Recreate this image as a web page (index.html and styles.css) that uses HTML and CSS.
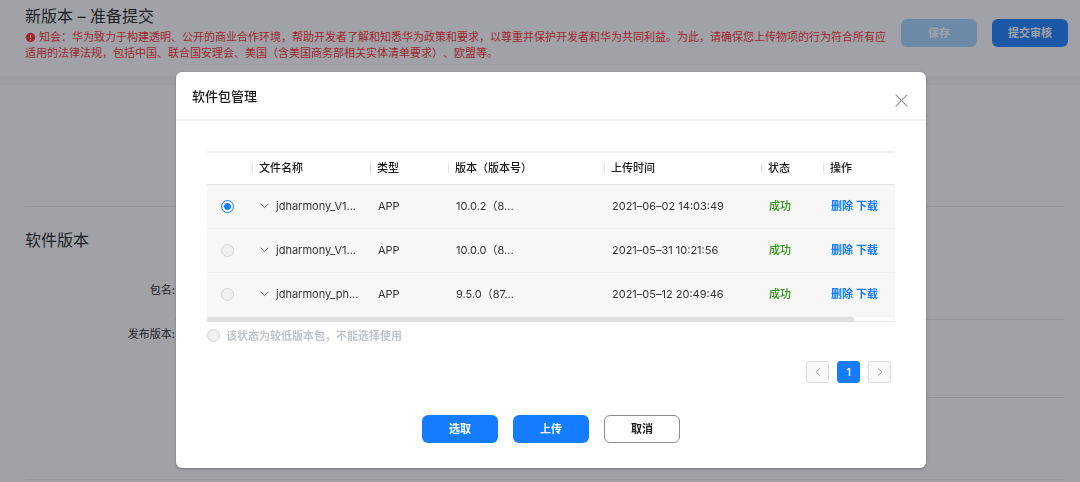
FILE: index.html
```html
<!DOCTYPE html>
<html lang="zh-CN">
<head>
<meta charset="utf-8">
<meta name="viewport" content="width=device-width, initial-scale=1">
<title>新版本 – 准备提交</title>
<link rel="stylesheet" href="styles.css">
</head>
<body>
<div class="page">
  <header class="page-header">
    <div class="page-intro">
      <h1 class="page-title">新版本 – 准备提交</h1>
      <p class="notice"><svg class="notice-icon" viewBox="0 0 12 12" aria-hidden="true"><circle cx="6" cy="6" r="5.2" fill="currentColor"/><path d="M6 3v3.6M6 8v1.2" stroke="#fff" stroke-width="1.2"/></svg>知会：华为致力于构建透明、公开的商业合作环境，帮助开发者了解和知悉华为政策和要求，以尊重并保护开发者和华为共同利益。为此，请确保您上传物项的行为符合所有应适用的法律法规，包括中国、联合国安理会、美国（含美国商务部相关实体清单要求）、欧盟等。</p>
    </div>
    <div class="page-actions">
      <button class="btn btn-muted" type="button">保存</button>
      <button class="btn btn-primary" type="button">提交审核</button>
    </div>
  </header>
  <main class="page-body">
    <section class="block-empty"></section>
    <section class="block">
      <h2 class="block-title">软件版本</h2>
      <dl class="fields">
        <div class="field"><dt>包名:</dt><dd></dd></div>
        <div class="field field-tall"><dt>发布版本:</dt><dd></dd></div>
      </dl>
    </section>
  </main>
</div>

<div class="overlay">
  <div class="modal" role="dialog" aria-modal="true" aria-labelledby="modal-title">
    <div class="modal-header">
      <h2 class="modal-title" id="modal-title">软件包管理</h2>
      <button class="close" type="button" aria-label="关闭"><svg viewBox="0 0 12 12" aria-hidden="true"><path d="M.6.6l10.8 10.8M11.4.6L.6 11.4"/></svg></button>
    </div>
    <div class="modal-body">
      <div class="table-wrap">
        <table class="table">
          <colgroup><col class="c-pick"><col class="c-name"><col class="c-type"><col class="c-ver"><col class="c-time"><col class="c-state"><col class="c-ops"></colgroup>
          <thead>
            <tr><td></td><th scope="col">文件名称</th><th scope="col">类型</th><th scope="col">版本（版本号）</th><th scope="col">上传时间</th><th scope="col">状态</th><th scope="col">操作</th></tr>
          </thead>
          <tbody>
            <tr>
              <td class="pick"><input class="radio" type="radio" name="pkg" aria-label="10.0.2" checked></td>
              <td><span class="file"><svg class="chevron" viewBox="0 0 9 6" aria-hidden="true"><path d="M.6.8l3.9 3.9L8.4.8"/></svg>jdharmony_V1...</span></td>
              <td>APP</td><td>10.0.2（8...</td><td>2021–06–02 14:03:49</td><td class="ok">成功</td>
              <td class="ops"><a href="#">删除</a> <a href="#">下载</a></td>
            </tr>
            <tr>
              <td class="pick"><input class="radio" type="radio" name="pkg" aria-label="10.0.0" disabled></td>
              <td><span class="file"><svg class="chevron" viewBox="0 0 9 6" aria-hidden="true"><path d="M.6.8l3.9 3.9L8.4.8"/></svg>jdharmony_V1...</span></td>
              <td>APP</td><td>10.0.0（8...</td><td>2021–05–31 10:21:56</td><td class="ok">成功</td>
              <td class="ops"><a href="#">删除</a> <a href="#">下载</a></td>
            </tr>
            <tr>
              <td class="pick"><input class="radio" type="radio" name="pkg" aria-label="9.5.0" disabled></td>
              <td><span class="file"><svg class="chevron" viewBox="0 0 9 6" aria-hidden="true"><path d="M.6.8l3.9 3.9L8.4.8"/></svg>jdharmony_ph...</span></td>
              <td>APP</td><td>9.5.0（87...</td><td>2021–05–12 20:49:46</td><td class="ok">成功</td>
              <td class="ops"><a href="#">删除</a> <a href="#">下载</a></td>
            </tr>
          </tbody>
        </table>
        <div class="scroll-track"><div class="scroll-thumb"></div></div>
      </div>
      <label class="hint"><input class="radio" type="radio" disabled>该状态为较低版本包，不能选择使用</label>
      <nav class="pager" aria-label="分页">
        <button class="page-btn" type="button" aria-label="上一页"><svg viewBox="0 0 6 8" aria-hidden="true"><path d="M4.8.6L1.2 4l3.6 3.4"/></svg></button>
        <button class="page-btn current" type="button" aria-current="page">1</button>
        <button class="page-btn" type="button" aria-label="下一页"><svg viewBox="0 0 6 8" aria-hidden="true"><path d="M1.2.6L4.8 4 1.2 7.4"/></svg></button>
      </nav>
    </div>
    <div class="modal-footer">
      <button class="btn btn-primary" type="button">选取</button>
      <button class="btn btn-primary" type="button">上传</button>
      <button class="btn btn-outline" type="button">取消</button>
    </div>
  </div>
</div>
</body>
</html>
```
FILE: styles.css
```css
* { box-sizing: border-box; }
body, h1, h2, p, dl, dd { margin: 0; }
body {
  background: #fff;
  color: #191919;
  font: 11px/16px Inter, "Noto Sans CJK SC", sans-serif;
  text-spacing-trim: space-all;
}
button { font: inherit; cursor: pointer; }

.page { height: 100vh; overflow: hidden; }
.page-header {
  display: flex;
  align-items: flex-start;
  gap: 12px;
  padding: 6px 12px 15px 25px;
  border-bottom: 9px solid #f6f7f8;
}
.page-intro { flex: 1; }
.page-title { font-size: 16px; line-height: 20px; font-weight: 400; margin-bottom: 3px; }
.notice { color: #fa2a2d; }
.notice-icon { width: 11px; height: 11px; margin-right: 3px; vertical-align: -2px; }
.page-actions { display: flex; gap: 15px; padding-top: 13px; }

.btn {
  width: 76px;
  height: 28px;
  padding: 0;
  border: 1px solid transparent;
  border-radius: 6px;
  font-weight: 600;
}
.btn-primary { background: #147dff; color: #fff; }
.btn-muted { background: #a3d4ff; color: #fff; }
.btn-outline { background: #fff; border-color: #8c8c8c; color: #191919; }

.page-body { padding: 0 16px 0 25px; }
.block-empty { height: 122px; border-bottom: 1px solid #eaebec; }
.block { padding-top: 21px; height: 273px; border-bottom: 1px solid #eaebec; }
.block-title { font-size: 16px; line-height: 24px; font-weight: 400; }
.fields { padding-top: 24px; }
.field { display: flex; height: 44px; line-height: 28px; }
.field dt { width: 150px; text-align: right; }
.field dd { flex: 1; border-bottom: 1px solid #e3e4e6; }
.field-tall { height: 78px; }

.overlay {
  position: fixed;
  inset: 0;
  display: flex;
  justify-content: center;
  align-items: flex-start;
  padding: 72px 0 0 22px;
  background: rgba(37, 40, 50, 0.43);
}
.modal {
  width: 750px;
  max-width: 100%;
  background: #fff;
  border-radius: 6px;
  box-shadow: 0 1px 3px rgba(0, 0, 0, 0.3);
}
.modal-header {
  display: flex;
  justify-content: space-between;
  align-items: center;
  height: 49px;
  padding: 0 18px 0 16px;
  border-bottom: 2px solid #f2f2f2;
}
.modal-title { font-size: 13px; line-height: 20px; font-weight: 500; }
.close { padding: 10px 0 0; border: 0; background: none; color: #8f8f8f; }
.close svg { display: block; width: 13px; height: 13px; }
.close path, .chevron path, .page-btn path { fill: none; stroke: currentColor; }

.modal-body { padding: 30px 31px 0; }
.table-wrap { border-top: 2px solid #efefef; }
.table { width: 100%; table-layout: fixed; border-collapse: collapse; }
.c-pick { width: 45px; }
.c-name { width: 118px; }
.c-type { width: 78px; }
.c-ver { width: 156px; }
.c-time { width: 157px; }
.c-state { width: 62px; }
.c-ops { width: auto; }
.table th, .table td { padding: 0 0 0 7px; text-align: left; white-space: nowrap; }
.table thead tr { height: 31px; border-bottom: 1px solid #e4e4e4; }
.table th {
  font-weight: 500;
  background: linear-gradient(#e2e2e2, #e2e2e2) left center / 1px 10px no-repeat;
}
.table tbody tr { height: 44px; background: #f7f7f7; border-bottom: 1px solid #f0f0f0; }
.table tbody td { color: #333; padding-left: 8px; }
.table tbody td.pick { padding-left: 14px; }
.file { display: flex; align-items: center; gap: 7px; }
.chevron { width: 9px; height: 6px; color: #666; }
.table tbody td.ok { color: #2b9412; font-weight: 500; }
.ops a { color: #147dff; font-weight: 600; text-decoration: none; }

.radio {
  appearance: none;
  display: block;
  flex: none;
  width: 13px;
  height: 13px;
  margin: 0;
  border: 1px solid #d4d4d4;
  border-radius: 50%;
  background: #f0f0f0;
}
.radio:checked {
  border-color: #147dff;
  background: radial-gradient(circle, #147dff 3px, #fff 4px);
}

.scroll-track { height: 5px; border-bottom: 1px solid #e4e4e4; }
.scroll-thumb { width: 94%; height: 5px; background: #dedfe1; border-radius: 2px; }
.hint {
  display: flex;
  align-items: center;
  gap: 6px;
  margin-top: 6px;
  color: #c0c4cc;
  font-weight: 600;
}

.pager { display: flex; justify-content: flex-end; gap: 8px; padding: 17px 4px 0 0; }
.page-btn {
  display: flex;
  align-items: center;
  justify-content: center;
  width: 23px;
  height: 22px;
  padding: 0;
  border: 1px solid #dedede;
  border-radius: 3px;
  background: #f7f7f7;
  color: #999;
}
.page-btn svg { width: 6px; height: 8px; }
.page-btn.current { background: #147dff; border-color: #147dff; color: #fff; font-weight: 500; }

.modal-footer { display: flex; justify-content: center; gap: 15px; padding: 32px 0 25px; }
```
